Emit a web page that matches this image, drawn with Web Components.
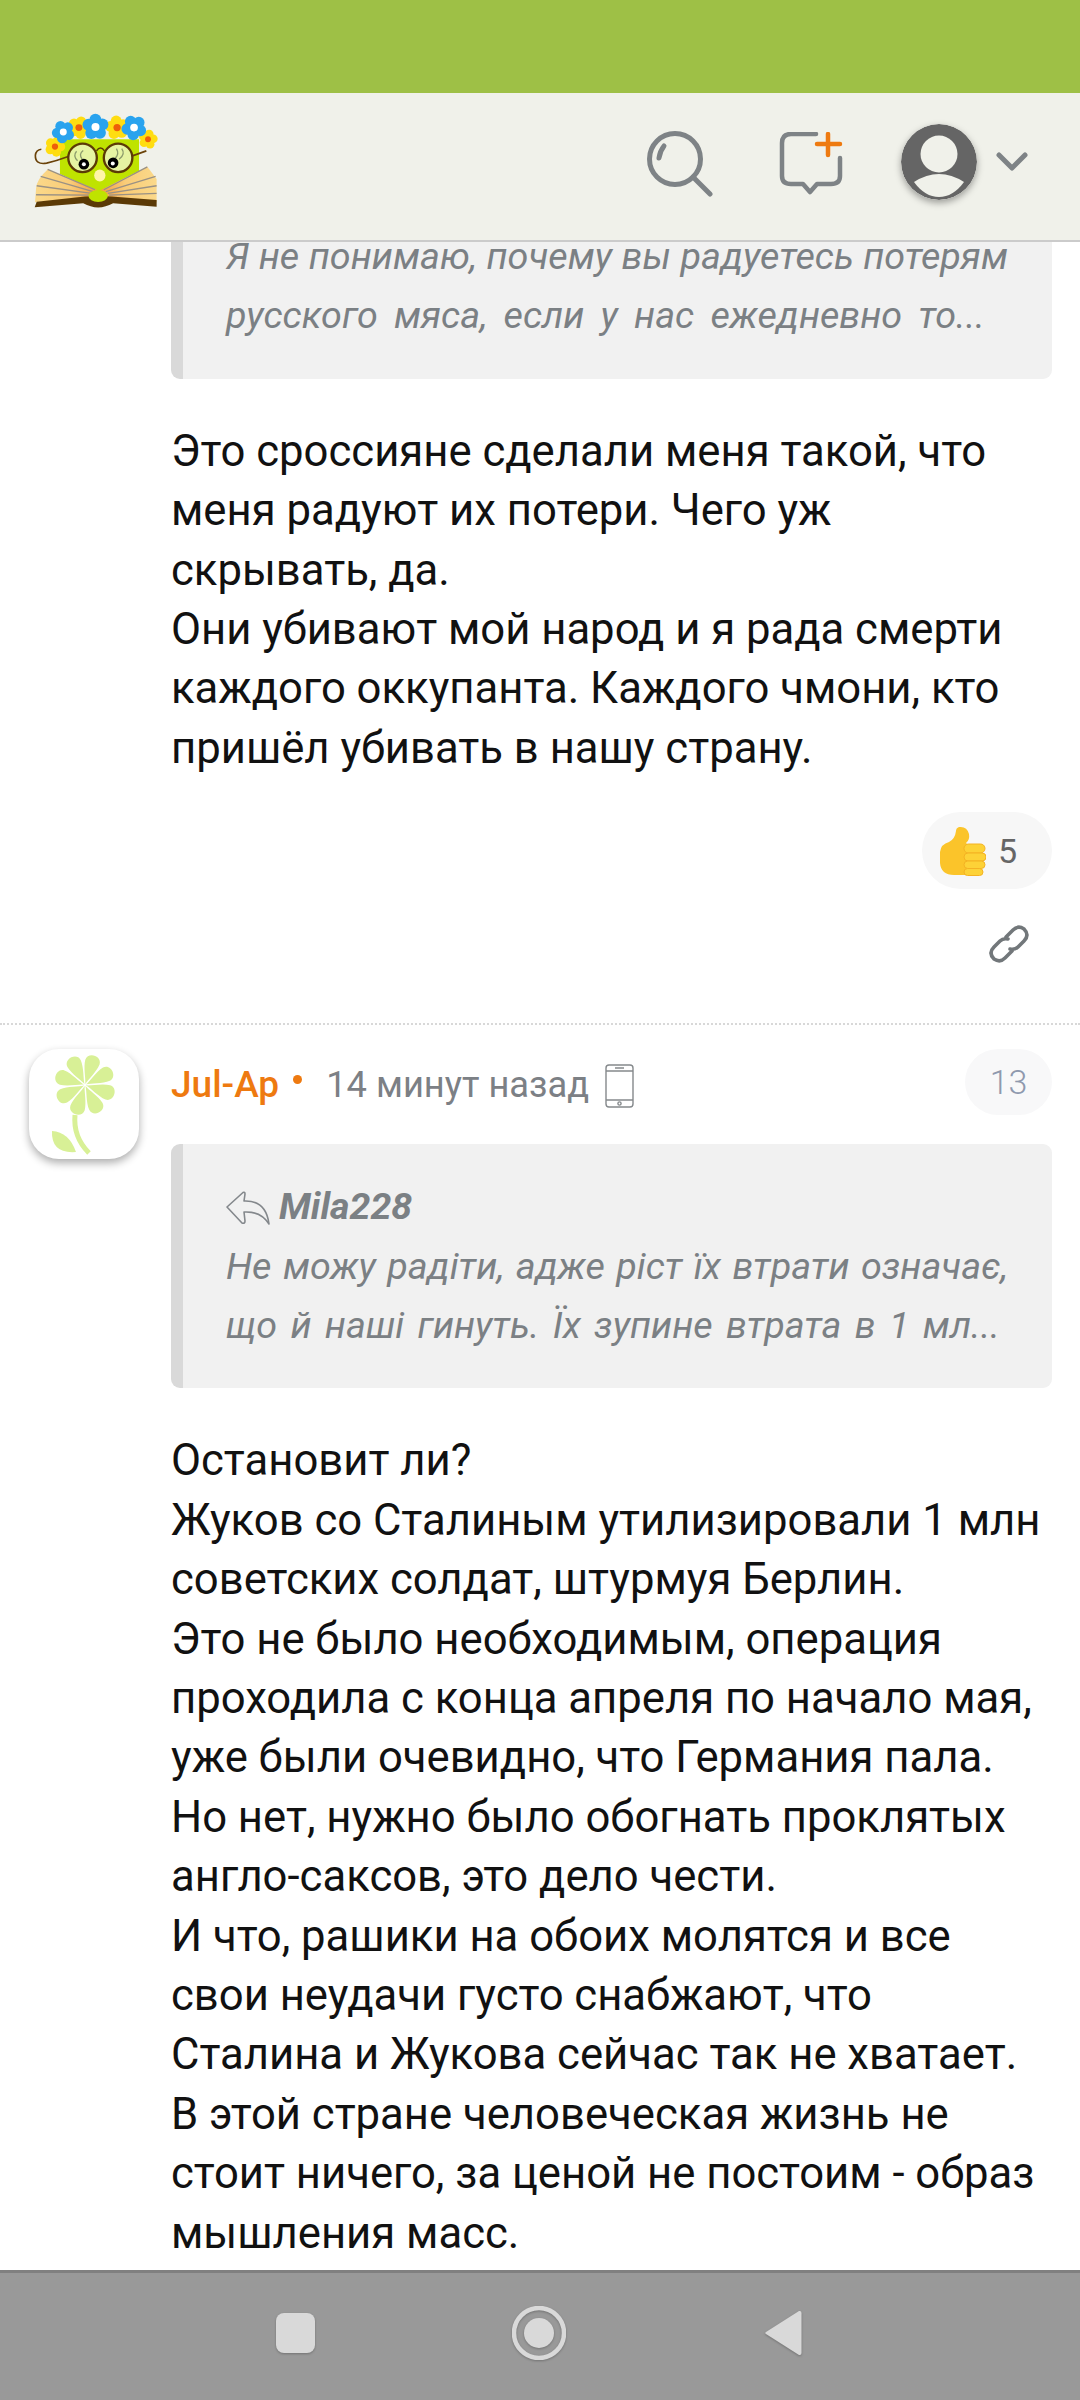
<!DOCTYPE html>
<html>
<head>
<meta charset="utf-8">
<style>
  html, body { margin: 0; padding: 0; }
  body {
    width: 1080px;
    height: 2400px;
    overflow: hidden;
    display: flex;
    flex-direction: column;
    background: #fff;
    font-family: Roboto, "Liberation Sans", sans-serif;
  }
  main { flex: 1; overflow: hidden; min-height: 0; }
</style>
</head>
<body>
  <site-header></site-header>
  <main>
    <comment-item class="first" continued>
      <comment-quote>
        <span style="--end:44px">Я не понимаю, почему вы радуетесь потерям</span>
        <span style="--end:67px">русского мяса, если у нас ежедневно то...</span>
      </comment-quote>
      Это сроссияне сделали меня такой, что<br>
      меня радуют их потери. Чего уж<br>
      скрывать, да.<br>
      Они убивают мой народ и я рада смерти<br>
      каждого оккупанта. Каждого чмони, кто<br>
      пришёл убивать в нашу страну.
      <comment-actions slot="actions" likes="5"></comment-actions>
    </comment-item>
    <comment-item name="Jul-Ap" time="14 минут назад" count="13">
      <flower-avatar slot="avatar"></flower-avatar>
      <comment-quote author="Mila228">
        <span style="--end:44px">Не можу радіти, адже ріст їх втрати означає,</span>
        <span style="--end:52px">що й наші гинуть. Їх зупине втрата в 1 мл...</span>
      </comment-quote>
      Остановит ли?<br>
      Жуков со Сталиным утилизировали 1 млн<br>
      советских солдат, штурмуя Берлин.<br>
      Это не было необходимым, операция<br>
      проходила с конца апреля по начало мая,<br>
      уже были очевидно, что Германия пала.<br>
      Но нет, нужно было обогнать проклятых<br>
      англо-саксов, это дело чести.<br>
      И что, рашики на обоих молятся и все<br>
      свои неудачи густо снабжают, что<br>
      Сталина и Жукова сейчас так не хватает.<br>
      В этой стране человеческая жизнь не<br>
      стоит ничего, за ценой не постоим - образ<br>
      мышления масс.
    </comment-item>
  </main>
  <phone-nav></phone-nav>

<script>
class SiteHeader extends HTMLElement {
  constructor() {
    super();
    this.shadowDOM = this.attachShadow({ mode: "open" });
  }

  connectedCallback() {
    this.render();
  }

  flower(cx, cy, r, petal, center) {
    let out = "";
    for (let i = 0; i < 5; i++) {
      const a = (i * 72 - 90 + cx) * Math.PI / 180;
      out += `<circle cx="${cx + Math.cos(a) * r}" cy="${cy + Math.sin(a) * r}" r="${r * 0.82}" fill="${petal}"/>`;
    }
    return out + `<circle cx="${cx}" cy="${cy}" r="${r * 0.55}" fill="${center}"/>`;
  }

  logo() {
    const blue = "#29a3ee";
    const yellow = "#ffdd11";
    const red = "#ee5f0a";
    return `
    <svg class="logo" width="127" height="98" viewBox="100 155 380 295">
      <defs>
        <linearGradient id="pl" x1="0" x2="1"><stop offset="0" stop-color="#fbd98a"/><stop offset=".55" stop-color="#f9cc78"/><stop offset="1" stop-color="#f59a3c"/></linearGradient>
        <linearGradient id="pr" x1="1" x2="0"><stop offset="0" stop-color="#fbd98a"/><stop offset=".55" stop-color="#f9cc78"/><stop offset="1" stop-color="#f59a3c"/></linearGradient>
      </defs>
      <path d="M180 240 L418 240 L418 345 L300 400 L180 345 Z" fill="#bfe300"/>
      <path d="M143 331 L298 395 L270 415 L105 430 L108 388 Q110 360 143 331 Z" fill="url(#pl)"/>
      <path d="M443 323 L298 395 L325 415 L471 430 L471 360 Z" fill="url(#pr)"/>
      <g stroke="#9a9184" stroke-width="4" fill="none">
        <path d="M143 331 L285 392M122 352 L280 398M110 380 L275 403M108 407 L270 408"/>
        <path d="M443 323 L312 392M468 352 L318 398M471 380 L324 403M471 403 L328 408"/>
      </g>
      <path d="M104 445 L110 428 L255 412 Q295 410 335 412 L471 423 L471 443 L340 433 Q295 458 250 433 Z" fill="#5b3a06"/>
      <ellipse cx="295" cy="411" rx="29" ry="18" fill="#bfe300"/>
      <path d="M205 292 Q170 305 140 312 Q105 318 106 288 Q108 272 124 270" fill="none" stroke="#6a4208" stroke-width="5"/>
      <path d="M398 290 L440 275" fill="none" stroke="#6a4208" stroke-width="5"/>
      <circle cx="248" cy="296" r="43" fill="#e6f4a2" stroke="#5b3a06" stroke-width="7"/>
      <circle cx="355" cy="296" r="43" fill="#e6f4a2" stroke="#5b3a06" stroke-width="7"/>
      <path d="M290 275 Q302 258 314 275" fill="none" stroke="#5b3a06" stroke-width="5"/>
      <path d="M233 305 Q218 290 230 276M247 300 Q235 285 250 274M345 298 Q360 285 350 268M358 300 Q378 285 366 268" fill="none" stroke="#8d9c6c" stroke-width="4"/>
      <circle cx="252" cy="315" r="16" fill="#000"/><circle cx="252" cy="315" r="6" fill="#fff"/>
      <circle cx="340" cy="311" r="16" fill="#000"/><circle cx="339" cy="313" r="6" fill="#fff"/>
      <ellipse cx="300" cy="349" rx="17" ry="18" fill="#fff5a8"/>
      ${this.flower(165, 262, 17, yellow, red)}
      ${this.flower(445, 240, 16, yellow, red)}
      ${this.flower(237, 205, 19, yellow, red)}
      ${this.flower(352, 205, 20, yellow, red)}
      ${this.flower(190, 218, 19, blue, "#fff")}
      ${this.flower(287, 203, 22, blue, "#fff")}
      ${this.flower(403, 205, 21, blue, "#fff")}
    </svg>`;
  }

  render() {
    this.shadowDOM.innerHTML = `
    <style>
      :host { display: block; flex: none; }
      .status { height: 93px; background: #9ec046; }
      .bar {
        height: 147px;
        background: #f0f1ea;
        border-bottom: 2px solid #cbcbcb;
        display: flex;
        align-items: center;
        padding-left: 33px;
        padding-right: 52px;
      }
      .logo { margin-bottom: 14px; }
      .tools { margin-left: auto; display: flex; align-items: center; margin-bottom: 9px; }
      .search { margin-top: 4px; margin-right: 66px; }
      .chat { margin-right: 58px; margin-top: 3px; }
      .user { border-radius: 50%; box-shadow: 0 3px 7px rgba(0,0,0,.35); margin-right: 19px; display: block; }
    </style>
    <div class="status"></div>
    <div class="bar">
      ${this.logo()}
      <div class="tools">
        <svg class="search" width="66" height="66" viewBox="0 0 66 66" fill="none" stroke="#7e8386" stroke-width="5" stroke-linecap="round">
          <circle cx="28" cy="28" r="25.5"/>
          <path d="M46 46 L63 63"/>
          <path d="M12 27 Q13 20 17 15"/>
        </svg>
        <svg class="chat" width="64" height="64" viewBox="0 0 64 64" fill="none" stroke-width="4.5" stroke-linecap="round" stroke-linejoin="round">
          <path d="M37 2 H12 Q3 2 3 11 V44 Q3 52 12 52 H24 L31 60 L38 52 H52 Q61 52 61 44 V26" stroke="#7e8386"/>
          <path d="M49 2 V23 M38 12 H61" stroke="#ee7a10"/>
        </svg>
        <svg class="user" width="76" height="76" viewBox="0 0 76 76">
          <circle cx="38" cy="38" r="38" fill="#656565"/>
          <circle cx="38" cy="30" r="18.5" fill="#f0f1ea"/>
          <path d="M13 58 Q38 42 63 58 Q52 73 38 73 Q24 73 13 58 Z" fill="#f0f1ea"/>
        </svg>
        <svg class="chev" width="32" height="20" viewBox="0 0 32 20" fill="none" stroke="#7e8386" stroke-width="5" stroke-linecap="round" stroke-linejoin="round">
          <path d="M3 3 L16 16 L29 3"/>
        </svg>
      </div>
    </div>`;
  }
}

class FlowerAvatar extends HTMLElement {
  constructor() {
    super();
    this.shadowDOM = this.attachShadow({ mode: "open" });
  }

  connectedCallback() {
    let petals = "";
    for (let i = 0; i < 8; i++) {
      petals += `<path transform="rotate(${i * 45 + 18} 56 36)" d="M56 35 C55 30 49 20 48.5 12 C48.5 3 63.5 3 63.5 12 C63 20 57 30 56 35 Z" fill="#d8f096"/>`;
    }
    this.shadowDOM.innerHTML = `
    <style>
      :host {
        display: block;
        width: 110px;
        height: 110px;
        border-radius: 30px;
        background: #fff;
        box-shadow: 0 4px 9px rgba(0,0,0,.32);
        overflow: hidden;
      }
      svg { display: block; }
    </style>
    <svg width="110" height="110" viewBox="0 0 110 110">
      ${petals}
      <path d="M46 66 Q44 88 60 104" fill="none" stroke="#d8f096" stroke-width="5"/>
      <path d="M23 82 Q40 83 47 103 Q22 105 23 82 Z" fill="#d8f096"/>
    </svg>`;
  }
}

class CommentQuote extends HTMLElement {
  constructor() {
    super();
    this.shadowDOM = this.attachShadow({ mode: "open" });
  }

  connectedCallback() {
    const author = this.getAttribute("author");
    this.shadowDOM.innerHTML = `
    <style>
      :host {
        display: block;
        background: #f1f1f1;
        border-left: 12px solid #d9d9d9;
        border-radius: 9px;
        padding: 33px 0 33px 43px;
        font-style: italic;
        font-size: 37.7px;
        line-height: 59.4px;
        color: #7b8084;
      }
      .author { display: flex; align-items: center; font-weight: 700; height: 59.4px; font-size: 37.5px; }
      .author svg { margin-right: 9px; flex: none; margin-top: 2px; }
      ::slotted(span) {
        display: block;
        height: 59.4px;
        white-space: nowrap;
        text-align: justify;
        text-align-last: justify;
        margin-right: var(--end);
      }
    </style>
    ${author ? `<div class="author">
      <svg width="44" height="34" viewBox="0 0 44 34" fill="none" stroke="#84888c" stroke-width="1.6" stroke-linejoin="round">
        <path d="M1 16 L17 1.5 Q19 0.5 19 3 L18 10 Q40 9 43 33 Q35 20 18 21 L19 30 Q19 33 16 32 Z"/>
      </svg>
      <span>${author}</span>
    </div>` : ""}
    <slot></slot>`;
  }
}

class CommentActions extends HTMLElement {
  constructor() {
    super();
    this.shadowDOM = this.attachShadow({ mode: "open" });
  }

  connectedCallback() {
    this.shadowDOM.innerHTML = `
    <style>
      :host { display: flex; flex-direction: column; align-items: flex-end; margin-top: 34px; padding-bottom: 58px; }
      .pill {
        width: 130px;
        height: 77px;
        border-radius: 39px;
        background: #f7f7f7;
        display: flex;
        align-items: center;
        box-sizing: border-box;
        padding-left: 18px;
        font-size: 34px;
        color: #666;
      }
      .pill svg { margin-right: 12px; flex: none; }
      .link { margin: 34px 22px 0 0; display: block; }
    </style>
    <div class="pill">
      <svg width="46" height="50" viewBox="0 0 46 50">
        <path d="M19 1 Q27 0 29 8 Q30 14 26 17 L27 18 L27 49 H14 Q1 49 0 37 L0 26 Q1 18 9 16 Q15 13 16 5 Q16 2 19 1 Z" fill="#fbc42a"/>
        <g fill="#fdd237" stroke="#f4b223" stroke-width="1">
          <rect x="24" y="18" width="21" height="9" rx="4.5"/>
          <rect x="24" y="27" width="22" height="8" rx="4"/>
          <rect x="24" y="35" width="21" height="7.5" rx="3.75"/>
          <rect x="24" y="42.5" width="19" height="7" rx="3.5"/>
        </g>
      </svg>
      <span>${this.getAttribute("likes")}</span>
    </div>
    <svg class="link" width="42" height="42" viewBox="0 0 42 42" fill="none" stroke="#72777a" stroke-width="3.6" stroke-linecap="round">
      <path d="M18 14 L25 7 Q30 2 36 6 Q42 12 36 18 L30 24 Q27 27 22 26"/>
      <path d="M24 28 L17 35 Q12 40 6 36 Q0 30 6 24 L12 18 Q15 15 20 16"/>
    </svg>`;
  }
}

class CommentItem extends HTMLElement {
  constructor() {
    super();
    this.shadowDOM = this.attachShadow({ mode: "open" });
  }

  connectedCallback() {
    const continued = this.hasAttribute("continued");
    const meta = continued ? "" : `
      <div class="meta">
        <span class="name">${this.getAttribute("name")}</span>
        <span class="dot"></span>
        <span class="time">${this.getAttribute("time")}</span>
        <svg class="phone" width="29" height="44" viewBox="0 0 29 44" fill="none" stroke="#85898c" stroke-width="1.4">
          <rect x="1" y="1" width="27" height="42" rx="3"/>
          <path d="M1 7 H28 M1 36 H28 M10 4 H19"/>
          <circle cx="14.5" cy="39.5" r="1.6"/>
        </svg>
        <span class="count">${this.getAttribute("count")}</span>
      </div>`;
    this.shadowDOM.innerHTML = `
    <style>
      :host {
        display: grid;
        grid-template-columns: 110px 1fr;
        column-gap: 32px;
        padding: 25px 28px 0 29px;
        box-sizing: border-box;
      }
      :host(.first) { margin-top: -48px; padding-top: 0; }
      :host(:not([continued])) { border-top: 2px dotted #d8d8d8; padding-top: 24px; }
      .meta { display: flex; align-items: center; height: 66px; margin-bottom: 29px; font-size: 36.3px; }
      .name { color: #ee7a10; font-weight: 500; font-size: 37px; margin-top: 5px; }
      .dot { width: 9px; height: 9px; border-radius: 50%; background: #ee7a10; margin: -5px 24px 0 14px; }
      .time { color: #7c8085; margin-top: 5px; }
      .phone { margin-left: 16px; margin-top: 8px; }
      .count {
        margin-left: auto;
        width: 87px;
        height: 66px;
        border-radius: 33px;
        background: #f8f8f9;
        color: #8f99ae;
        font-size: 34px;
        font-weight: 300;
        display: flex;
        align-items: center;
        justify-content: center;
      }
      .body { font-size: 43.65px; line-height: 59.4px; color: #111; margin-top: 43px; white-space: nowrap; }
      .wrap { min-width: 0; }
    </style>
    <div><slot name="avatar"></slot></div>
    <div class="wrap">
      ${meta}
      <slot name="quote"></slot>
      <div class="body"><slot></slot></div>
      <slot name="actions"></slot>
    </div>`;
    const quote = this.querySelector("comment-quote");
    if (quote) quote.setAttribute("slot", "quote");
  }
}

class PhoneNav extends HTMLElement {
  constructor() {
    super();
    this.shadowDOM = this.attachShadow({ mode: "open" });
  }

  connectedCallback() {
    this.shadowDOM.innerHTML = `
    <style>
      :host {
        display: flex;
        flex: none;
        box-sizing: border-box;
        height: 130px;
        background: #999;
        border-top: 3px solid #808080;
        align-items: center;
        padding-left: 276px;
        padding-bottom: 8px;
      }
      svg { display: block; filter: drop-shadow(0 1px 1px rgba(0,0,0,.25)); }
      .home { margin-left: 197px; }
      .back { margin-left: 198px; }
    </style>
    <svg width="39" height="40" viewBox="0 0 39 40"><rect width="39" height="40" rx="8" fill="#d9d9d9"/></svg>
    <svg class="home" width="54" height="54" viewBox="0 0 54 54">
      <circle cx="27" cy="27" r="25" fill="none" stroke="#d9d9d9" stroke-width="4.5"/>
      <circle cx="27" cy="27" r="15" fill="#d9d9d9"/>
    </svg>
    <svg class="back" width="38" height="46" viewBox="0 0 38 46"><path d="M2 22 L35 1 Q37.5 0.5 37.5 3 V43 Q37.5 45.5 35 45 L2 24 Q0.5 23 2 22 Z" fill="#d9d9d9"/></svg>`;
  }
}

customElements.define("site-header", SiteHeader);
customElements.define("flower-avatar", FlowerAvatar);
customElements.define("comment-quote", CommentQuote);
customElements.define("comment-actions", CommentActions);
customElements.define("comment-item", CommentItem);
customElements.define("phone-nav", PhoneNav);
</script>
</body>
</html>
